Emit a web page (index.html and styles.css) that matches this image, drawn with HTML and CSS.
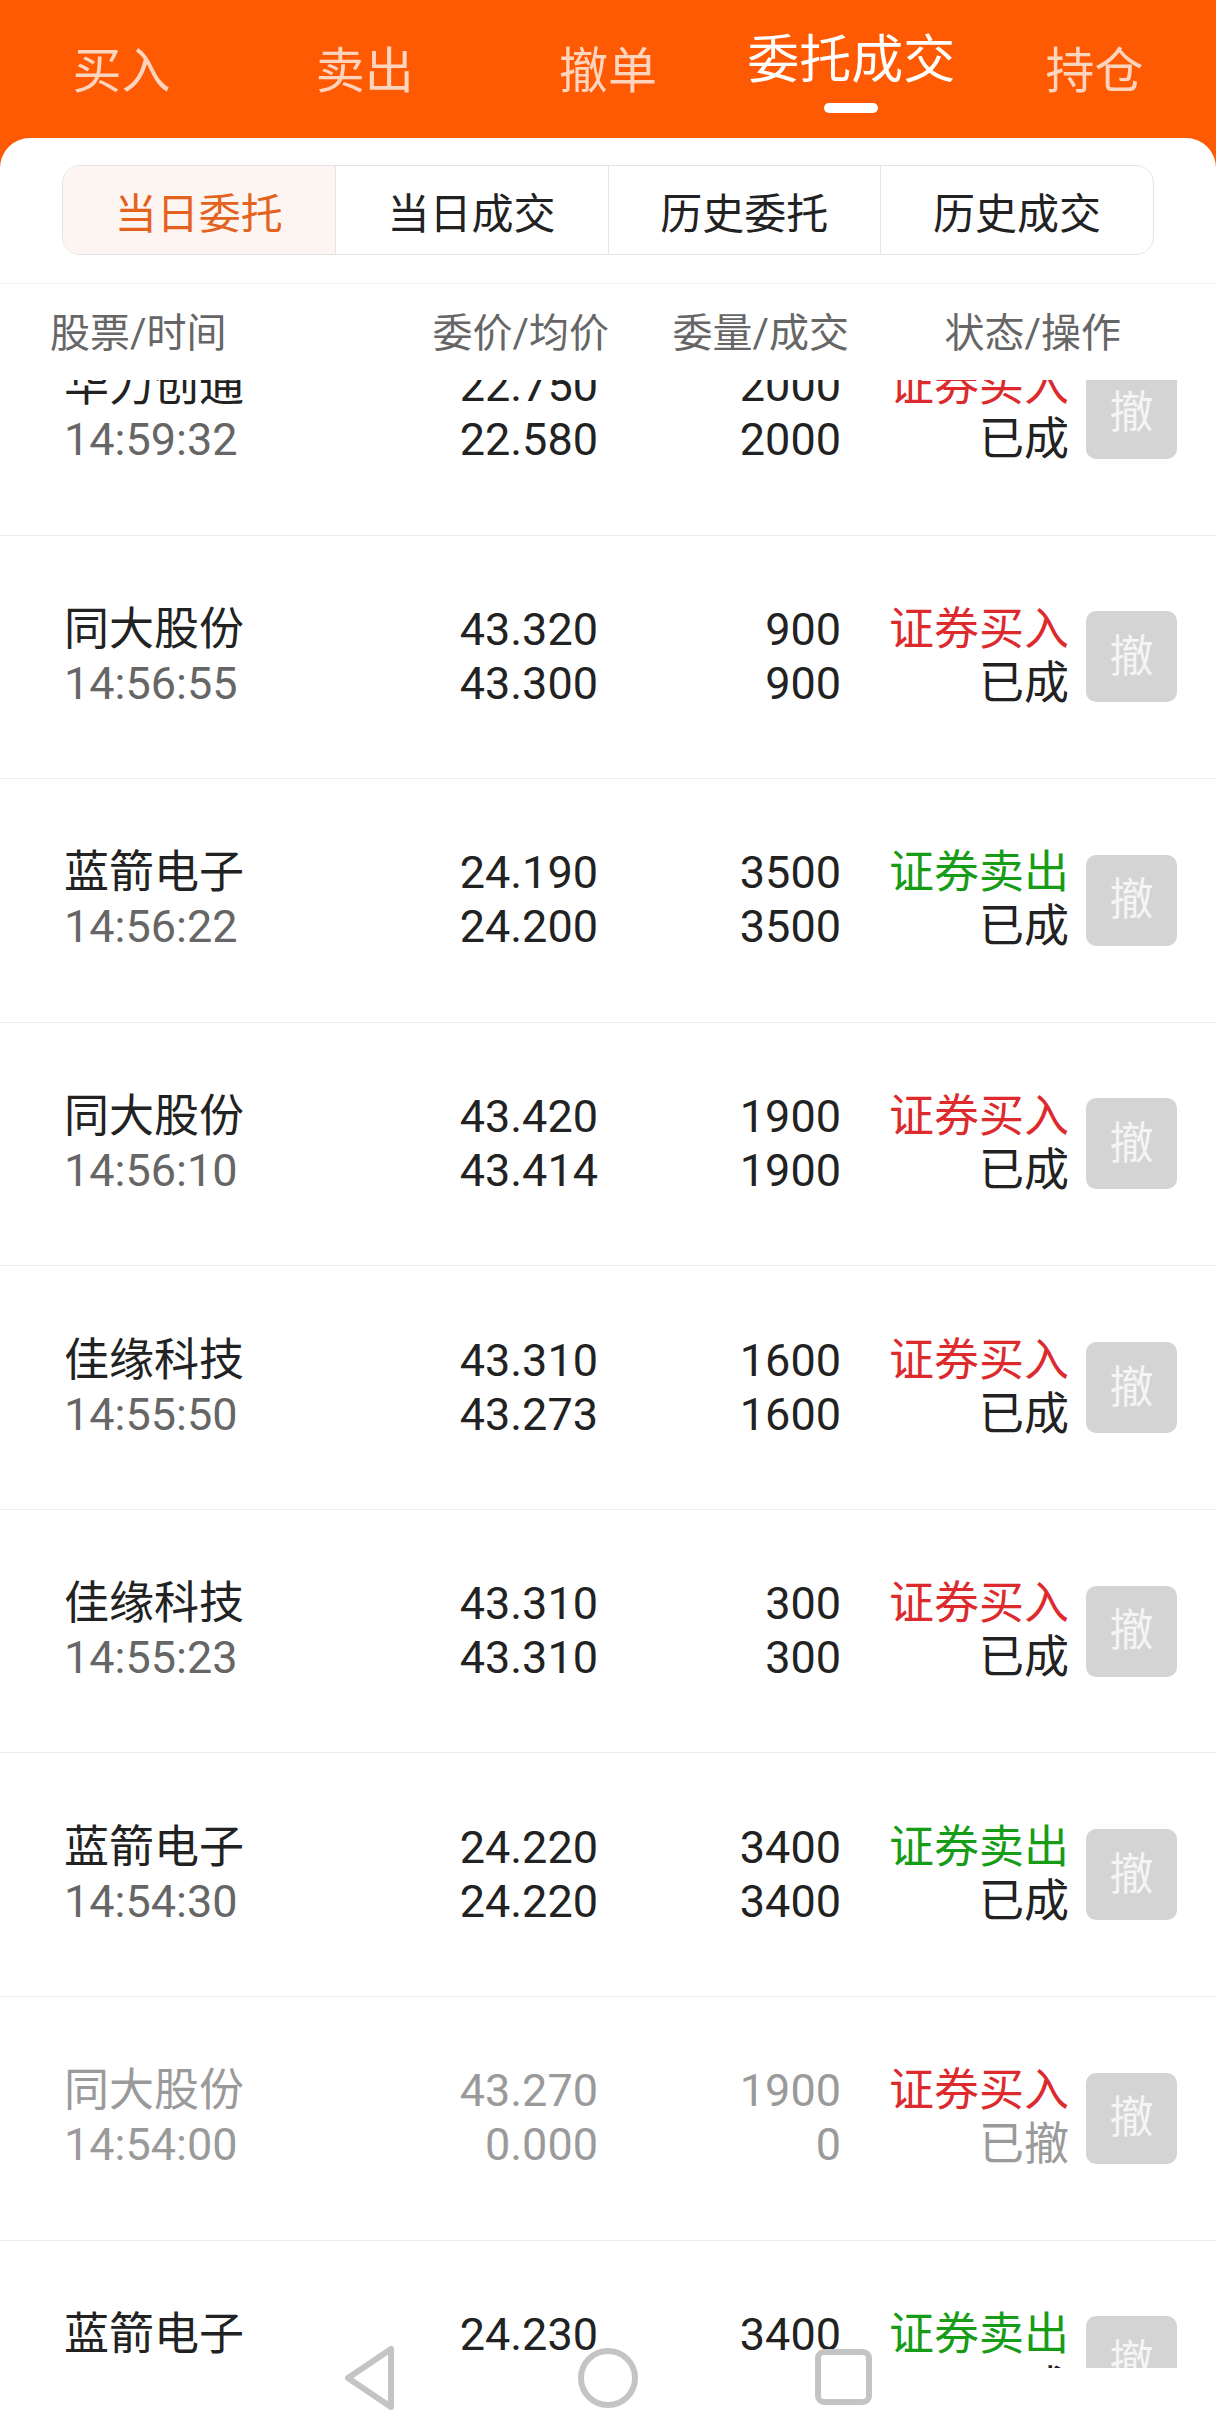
FILE: index.html
```html
<!DOCTYPE html>
<html lang="zh-CN">
<head>
  <meta charset="UTF-8">
  <title>委托成交</title>
  <meta name="viewport" content="width=device-width, initial-scale=1.0">
  <link rel="stylesheet" href="styles.css">
</head>
<body>
<div class="app">

  <nav class="tabs">
    <div class="tab">买入</div>
    <div class="tab">卖出</div>
    <div class="tab">撤单</div>
    <div class="tab active">委托成交<span class="bar"></span></div>
    <div class="tab">持仓</div>
  </nav>

  <div class="panel">
    <div class="seg">
      <div class="seg-item active">当日委托</div>
      <div class="seg-item">当日成交</div>
      <div class="seg-item">历史委托</div>
      <div class="seg-item">历史成交</div>
    </div>

    <div class="thead">
      <div>股票/时间</div>
      <div class="r">委价/均价</div>
      <div class="r">委量/成交</div>
      <div class="r">状态/操作</div>
    </div>

    <div class="list">
      <div class="list-inner">

        <div class="row">
          <div class="c-name"><div>华力创通</div><div class="time">14:59:32</div></div>
          <div class="c-num"><div>22.750</div><div>22.580</div></div>
          <div class="c-num"><div>2000</div><div>2000</div></div>
          <div class="c-num"><div class="buy">证券买入</div><div>已成</div></div>
          <div class="c-op"><span class="cancel">撤</span></div>
        </div>

        <div class="row">
          <div class="c-name"><div>同大股份</div><div class="time">14:56:55</div></div>
          <div class="c-num"><div>43.320</div><div>43.300</div></div>
          <div class="c-num"><div>900</div><div>900</div></div>
          <div class="c-num"><div class="buy">证券买入</div><div>已成</div></div>
          <div class="c-op"><span class="cancel">撤</span></div>
        </div>

        <div class="row">
          <div class="c-name"><div>蓝箭电子</div><div class="time">14:56:22</div></div>
          <div class="c-num"><div>24.190</div><div>24.200</div></div>
          <div class="c-num"><div>3500</div><div>3500</div></div>
          <div class="c-num"><div class="sell">证券卖出</div><div>已成</div></div>
          <div class="c-op"><span class="cancel">撤</span></div>
        </div>

        <div class="row">
          <div class="c-name"><div>同大股份</div><div class="time">14:56:10</div></div>
          <div class="c-num"><div>43.420</div><div>43.414</div></div>
          <div class="c-num"><div>1900</div><div>1900</div></div>
          <div class="c-num"><div class="buy">证券买入</div><div>已成</div></div>
          <div class="c-op"><span class="cancel">撤</span></div>
        </div>

        <div class="row">
          <div class="c-name"><div>佳缘科技</div><div class="time">14:55:50</div></div>
          <div class="c-num"><div>43.310</div><div>43.273</div></div>
          <div class="c-num"><div>1600</div><div>1600</div></div>
          <div class="c-num"><div class="buy">证券买入</div><div>已成</div></div>
          <div class="c-op"><span class="cancel">撤</span></div>
        </div>

        <div class="row">
          <div class="c-name"><div>佳缘科技</div><div class="time">14:55:23</div></div>
          <div class="c-num"><div>43.310</div><div>43.310</div></div>
          <div class="c-num"><div>300</div><div>300</div></div>
          <div class="c-num"><div class="buy">证券买入</div><div>已成</div></div>
          <div class="c-op"><span class="cancel">撤</span></div>
        </div>

        <div class="row">
          <div class="c-name"><div>蓝箭电子</div><div class="time">14:54:30</div></div>
          <div class="c-num"><div>24.220</div><div>24.220</div></div>
          <div class="c-num"><div>3400</div><div>3400</div></div>
          <div class="c-num"><div class="sell">证券卖出</div><div>已成</div></div>
          <div class="c-op"><span class="cancel">撤</span></div>
        </div>

        <div class="row revoked">
          <div class="c-name"><div>同大股份</div><div class="time">14:54:00</div></div>
          <div class="c-num"><div>43.270</div><div>0.000</div></div>
          <div class="c-num"><div>1900</div><div>0</div></div>
          <div class="c-num"><div class="buy">证券买入</div><div>已撤</div></div>
          <div class="c-op"><span class="cancel">撤</span></div>
        </div>

        <div class="row">
          <div class="c-name"><div>蓝箭电子</div><div class="time">14:53:41</div></div>
          <div class="c-num"><div>24.230</div><div>24.230</div></div>
          <div class="c-num"><div>3400</div><div>3400</div></div>
          <div class="c-num"><div class="sell">证券卖出</div><div>已成</div></div>
          <div class="c-op"><span class="cancel">撤</span></div>
        </div>

      </div>
    </div>
  </div>

  <!-- system navigation bar, drawn over the list -->
  <div class="sysnav">
    <svg width="60" height="66" viewBox="0 0 60 66">
      <path d="M49 4 L49 62 L6 33 Z" fill="none" stroke="#c4c4c4" stroke-width="6" stroke-linejoin="round"/>
    </svg>
    <svg width="62" height="62" viewBox="0 0 62 62">
      <circle cx="31" cy="31" r="27" fill="none" stroke="#c4c4c4" stroke-width="6"/>
    </svg>
    <svg width="60" height="60" viewBox="0 0 60 60">
      <rect x="4" y="4" width="51" height="50" rx="6" fill="none" stroke="#c4c4c4" stroke-width="6"/>
    </svg>
  </div>

</div>
</body>
</html>
```

FILE: styles.css
```css
* { box-sizing: border-box; }
body {
  margin: 0;
  font-family: Roboto, "Noto Sans CJK SC", sans-serif;
  color: #222;
  background: #fff;
}
.app {
  position: relative;
  height: 2427px;
  overflow: hidden;
  background: #fe5a03;
}

/* top tabs */
.tabs { display: flex; height: 138px; }
.tab {
  flex: 1;
  display: flex;
  flex-direction: column;
  align-items: center;
  padding-top: 42px;
  font-size: 49px;
  line-height: 60px;
  color: #fdd5bf;
}
.tab.active { padding-top: 31px; font-size: 52px; color: #fff; }
.tab .bar {
  display: block;
  width: 54px;
  height: 10px;
  margin-top: 12px;
  border-radius: 5px;
  background: #fff;
}

/* white panel */
.panel {
  height: 2289px;
  background: #fff;
  border-radius: 30px 30px 0 0;
  padding-top: 27px;
}
.seg {
  display: flex;
  height: 90px;
  margin: 0 62px;
  border: 1.5px solid #e4e4e4;
  border-radius: 18px;
  overflow: hidden;
}
.seg-item {
  flex: 1;
  display: flex;
  align-items: center;
  justify-content: center;
  font-size: 42px;
  color: #222;
  border-left: 1.5px solid #e4e4e4;
}
.seg-item:first-child { border-left: none; }
.seg-item.active { background: #fdf5f1; color: #e4621d; }

.thead {
  display: grid;
  grid-template-columns: 359px 200px 240px 272px;
  align-items: center;
  height: 97px;
  margin-top: 28px;
  padding-left: 50px;
  padding-bottom: 5px;
  border-top: 1px solid #f3f3f3;
  font-size: 40px;
  color: #666;
}
.thead .r { text-align: right; }

/* order list (scrolled a little) */
.list { height: 1988px; overflow: hidden; }
.list-inner { margin-top: -88px; }
.row {
  display: grid;
  grid-template-columns: 334px 200px 243px 228px 108px;
  align-items: center;
  height: 243.57px;
  padding: 0 39px 0 64px;
  border-bottom: 1px solid #ececec;
  font-size: 45px;
  line-height: 54px;
}
.c-num { text-align: right; }
.time { color: #666; }
.buy { color: #dc2a2d; }
.sell { color: #179c17; }
.c-op { display: flex; justify-content: flex-end; }
.cancel {
  display: flex;
  align-items: center;
  justify-content: center;
  width: 91px;
  height: 91px;
  border-radius: 10px;
  background: #d4d4d4;
  color: #f5f5f5;
  font-size: 44px;
}
.revoked, .revoked .time { color: #9a9a9a; }

.sysnav {
  position: absolute;
  left: 0;
  right: 0;
  top: 2345px;
  display: flex;
  align-items: center;
  justify-content: center;
  gap: 175px;
  height: 66px;
}
```
